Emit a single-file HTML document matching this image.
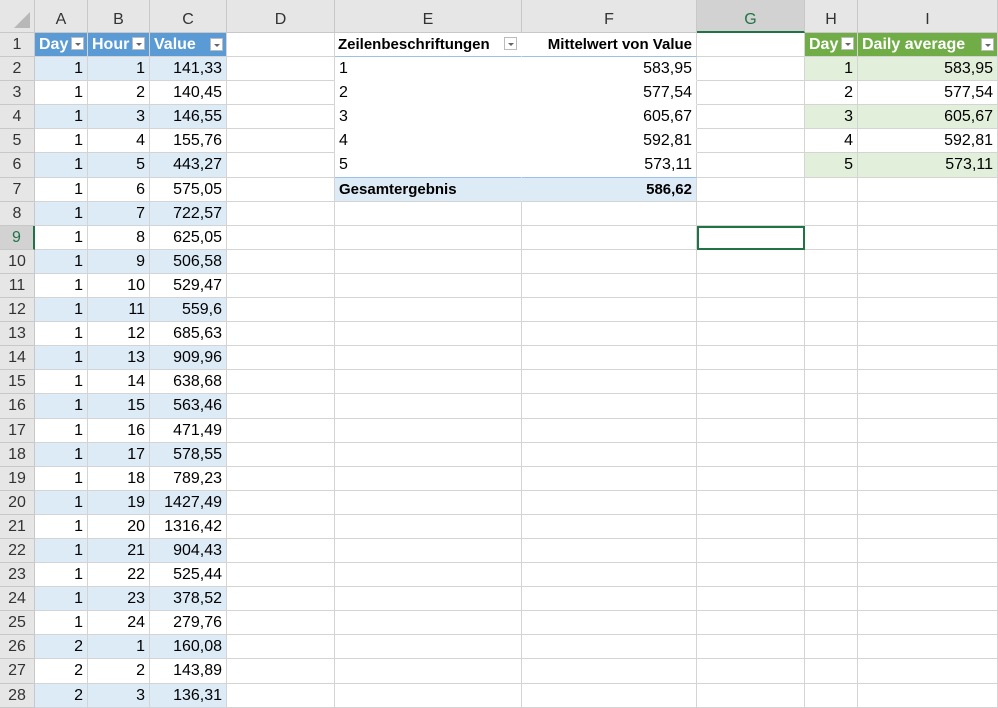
<!DOCTYPE html><html><head><meta charset="utf-8"><style>
body{margin:0;width:998px;height:708px;overflow:hidden;background:#fff;font-family:"Liberation Sans",Arial,sans-serif;font-size:16px;color:#000}
.g{display:grid;grid-template-columns:35px 53px 62px 77px 108px 187px 175px 108px 53px 140px;grid-template-rows:33px repeat(28,24.1px)}
.g>div{box-sizing:border-box;border-right:1px solid #d4d4d4;border-bottom:1px solid #d4d4d4;line-height:24px;white-space:nowrap;overflow:hidden;padding:0 4px;position:relative}
.g>div.h{background:#e6e6e6;color:#333;text-align:center;line-height:40px;border-color:#c8c8c8}
.g>div.n{background:#e6e6e6;color:#333;text-align:center;padding:0;border-color:#c8c8c8}
.g>div.hs{background:#d2d2d2;border-bottom:2px solid #217346}
.r{text-align:right}
.B{background:#ddebf7}
.Gn{background:#e2efda}
.bh{background:#5b9bd5!important;color:#fff;font-weight:bold}
.gh{background:#70ad47!important;color:#fff;font-weight:bold}
.bt{font-weight:bold}
.f{display:inline-block;width:13px;height:13px;background:#fff;border:1px solid #bbb;box-sizing:border-box;vertical-align:-1px;margin-left:3px;position:relative}
.f:after{content:"";position:absolute;left:3px;top:5px;border-left:3px solid transparent;border-right:3px solid transparent;border-top:3px solid #666}
.fr{position:absolute;right:3px;top:5px;margin:0}
.pv{border-bottom-color:transparent!important}
.ne{border-right-color:transparent!important}
</style></head><body><div class="g">
<div class="h" style="background:#e6e6e6"><svg width="20" height="20" style="position:absolute;left:12px;top:10px"><polygon points="18,2 18,18 2,18" fill="#b8b8b8"/></svg></div><div class="h">A</div><div class="h">B</div><div class="h">C</div><div class="h">D</div><div class="h">E</div><div class="h">F</div><div class="h hs" style="color:#217346">G</div><div class="h">H</div><div class="h">I</div>
<div class="n">1</div><div class="bh">Day<span class="f"></span></div><div class="bh">Hour<span class="f"></span></div><div class="bh">Value<span class="f fr"></span></div><div></div><div class="bt ne" style="font-size:15px;border-bottom:1px solid #9bc2e6;padding-left:3px">Zeilenbeschriftungen<span class="f" style="margin-left:14px"></span></div><div class="bt r" style="font-size:15px;border-bottom:1px solid #9bc2e6">Mittelwert von Value</div><div></div><div class="gh">Day<span class="f"></span></div><div class="gh">Daily average<span class="f fr"></span></div>
<div class="n">2</div><div class="r B">1</div><div class="r B">1</div><div class="r B">141,33</div><div></div><div class="pv ne">1</div><div class="r pv">583,95</div><div></div><div class="r Gn">1</div><div class="r Gn">583,95</div>
<div class="n">3</div><div class="r">1</div><div class="r">2</div><div class="r">140,45</div><div></div><div class="pv ne">2</div><div class="r pv">577,54</div><div></div><div class="r">2</div><div class="r">577,54</div>
<div class="n">4</div><div class="r B">1</div><div class="r B">3</div><div class="r B">146,55</div><div></div><div class="pv ne">3</div><div class="r pv">605,67</div><div></div><div class="r Gn">3</div><div class="r Gn">605,67</div>
<div class="n">5</div><div class="r">1</div><div class="r">4</div><div class="r">155,76</div><div></div><div class="pv ne">4</div><div class="r pv">592,81</div><div></div><div class="r">4</div><div class="r">592,81</div>
<div class="n">6</div><div class="r B">1</div><div class="r B">5</div><div class="r B">443,27</div><div></div><div class="ne" style="border-bottom-color:#9bc2e6">5</div><div class="r" style="border-bottom-color:#9bc2e6">573,11</div><div></div><div class="r Gn">5</div><div class="r Gn">573,11</div>
<div class="n">7</div><div class="r">1</div><div class="r">6</div><div class="r">575,05</div><div></div><div class="B bt ne" style="font-size:15px">Gesamtergebnis</div><div class="B bt r" style="font-size:15px">586,62</div><div></div><div></div><div></div>
<div class="n">8</div><div class="r B">1</div><div class="r B">7</div><div class="r B">722,57</div><div></div><div></div><div></div><div></div><div></div><div></div>
<div class="n" style="color:#217346;background:#d2d2d2;border-right:2px solid #217346">9</div><div class="r">1</div><div class="r">8</div><div class="r">625,05</div><div></div><div></div><div></div><div style="outline:2px solid #217346;outline-offset:-2px"></div><div></div><div></div>
<div class="n">10</div><div class="r B">1</div><div class="r B">9</div><div class="r B">506,58</div><div></div><div></div><div></div><div></div><div></div><div></div>
<div class="n">11</div><div class="r">1</div><div class="r">10</div><div class="r">529,47</div><div></div><div></div><div></div><div></div><div></div><div></div>
<div class="n">12</div><div class="r B">1</div><div class="r B">11</div><div class="r B">559,6</div><div></div><div></div><div></div><div></div><div></div><div></div>
<div class="n">13</div><div class="r">1</div><div class="r">12</div><div class="r">685,63</div><div></div><div></div><div></div><div></div><div></div><div></div>
<div class="n">14</div><div class="r B">1</div><div class="r B">13</div><div class="r B">909,96</div><div></div><div></div><div></div><div></div><div></div><div></div>
<div class="n">15</div><div class="r">1</div><div class="r">14</div><div class="r">638,68</div><div></div><div></div><div></div><div></div><div></div><div></div>
<div class="n">16</div><div class="r B">1</div><div class="r B">15</div><div class="r B">563,46</div><div></div><div></div><div></div><div></div><div></div><div></div>
<div class="n">17</div><div class="r">1</div><div class="r">16</div><div class="r">471,49</div><div></div><div></div><div></div><div></div><div></div><div></div>
<div class="n">18</div><div class="r B">1</div><div class="r B">17</div><div class="r B">578,55</div><div></div><div></div><div></div><div></div><div></div><div></div>
<div class="n">19</div><div class="r">1</div><div class="r">18</div><div class="r">789,23</div><div></div><div></div><div></div><div></div><div></div><div></div>
<div class="n">20</div><div class="r B">1</div><div class="r B">19</div><div class="r B">1427,49</div><div></div><div></div><div></div><div></div><div></div><div></div>
<div class="n">21</div><div class="r">1</div><div class="r">20</div><div class="r">1316,42</div><div></div><div></div><div></div><div></div><div></div><div></div>
<div class="n">22</div><div class="r B">1</div><div class="r B">21</div><div class="r B">904,43</div><div></div><div></div><div></div><div></div><div></div><div></div>
<div class="n">23</div><div class="r">1</div><div class="r">22</div><div class="r">525,44</div><div></div><div></div><div></div><div></div><div></div><div></div>
<div class="n">24</div><div class="r B">1</div><div class="r B">23</div><div class="r B">378,52</div><div></div><div></div><div></div><div></div><div></div><div></div>
<div class="n">25</div><div class="r">1</div><div class="r">24</div><div class="r">279,76</div><div></div><div></div><div></div><div></div><div></div><div></div>
<div class="n">26</div><div class="r B">2</div><div class="r B">1</div><div class="r B">160,08</div><div></div><div></div><div></div><div></div><div></div><div></div>
<div class="n">27</div><div class="r">2</div><div class="r">2</div><div class="r">143,89</div><div></div><div></div><div></div><div></div><div></div><div></div>
<div class="n">28</div><div class="r B">2</div><div class="r B">3</div><div class="r B">136,31</div><div></div><div></div><div></div><div></div><div></div><div></div>
</div></body></html>
